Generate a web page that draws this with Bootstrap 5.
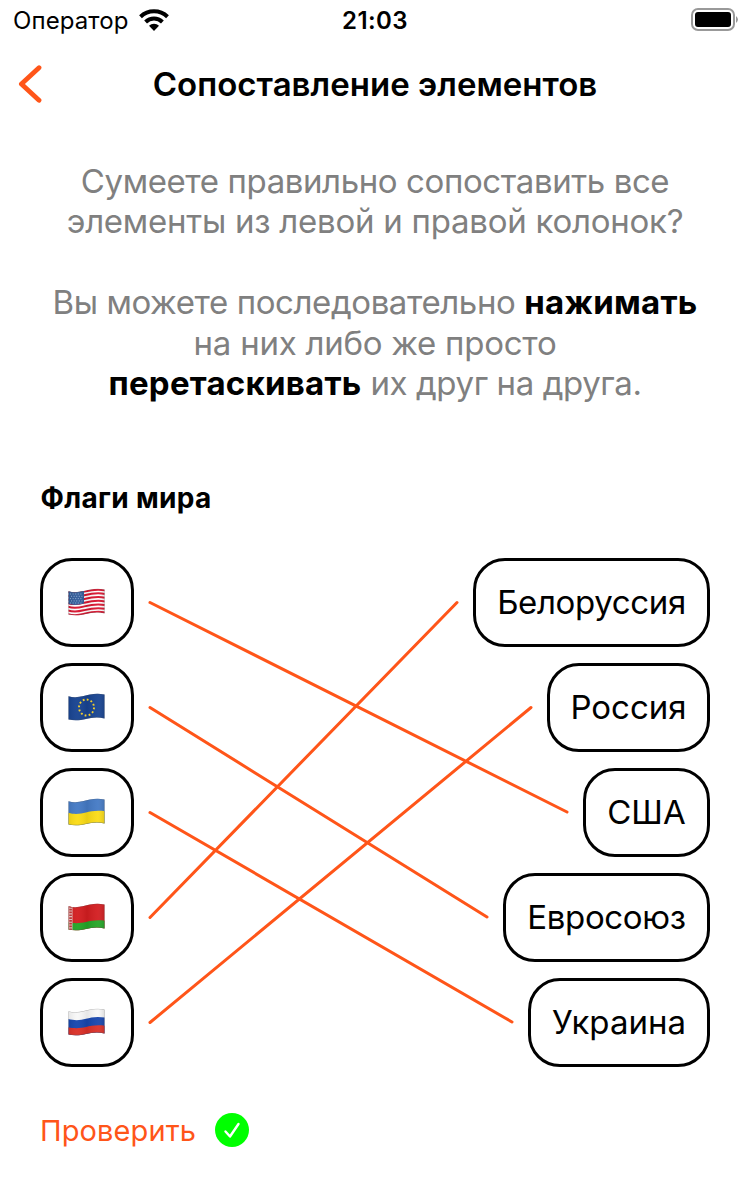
<!DOCTYPE html>
<html lang="ru">
<head>
<meta charset="utf-8">
<meta name="viewport" content="width=device-width, initial-scale=1">
<title>Сопоставление элементов</title>
<link href="https://cdn.jsdelivr.net/npm/bootstrap@5.3.0/dist/css/bootstrap.min.css" rel="stylesheet">
<style>
body{font-family:Inter,"Liberation Sans",sans-serif;background:#fff;color:#000;width:750px;height:1198px;overflow:hidden}
.status-bar{height:40px;padding-left:13px;padding-right:12px;font-size:24px;line-height:40px}
.carrier{letter-spacing:.1px;padding-top:2px}
.wifi{margin-left:10px}
.battery{margin-top:8px}
.clock{font-weight:600;letter-spacing:.4px;padding-top:1px}
.title-bar{height:88px;padding-left:18px}
.title-bar h1{font-size:33px;font-weight:600;letter-spacing:.03px;line-height:40px}
.intro{height:330px;padding-top:32.6px;font-size:33px;line-height:40.5px;color:#808080}
.intro span{white-space:nowrap;letter-spacing:-.4px}
.intro .fit-loose{letter-spacing:-.25px}
.intro b{color:#000;font-weight:700;letter-spacing:.25px}
.group-title{height:100px;padding:19.5px 40.5px 0;font-size:28px;font-weight:700;line-height:40px;letter-spacing:.32px}
.match-board{height:509px;padding:0 40px}
.match-list{gap:16px}
.chip{height:89px;border:3px solid #000;border-radius:32px;font-size:33px;line-height:1;background:#fff;white-space:nowrap}
.chip-flag{width:94px}
.chip-long{letter-spacing:-.36px}
.match-lines{stroke:#ff5519;stroke-width:3;stroke-linecap:round}
.check-row{padding:45px 40px 0;gap:19px}
.check-link{color:#ff5519;font-size:29px;line-height:34px;padding-top:2px;letter-spacing:.12px}
</style>
</head>
<body>
<svg width="0" height="0" class="position-absolute" aria-hidden="true">
  <defs>
    <clipPath id="wave"><path d="M.5 3.2C5 4.6 10 4.4 15.500 3S28-.4 36.500 1.500V25.400C29 23.600 23 24.800 18 26S6 27.800.5 26.500Z"/></clipPath>
    <linearGradient id="fold"><stop offset="0" stop-color="#000" stop-opacity=".08"/><stop offset=".25" stop-color="#fff" stop-opacity=".04"/><stop offset=".5" stop-color="#000" stop-opacity=".07"/><stop offset=".78" stop-color="#fff" stop-opacity=".05"/><stop offset="1" stop-color="#000" stop-opacity=".16"/></linearGradient>
    <g id="shade"><rect width="38" height="30" fill="url(#fold)"/><path d="M.5 3.2C5 4.6 10 4.4 15.500 3S28-.4 36.500 1.500V25.400C29 23.600 23 24.800 18 26S6 27.800.5 26.500Z" fill="none" stroke="#555" stroke-opacity=".4" stroke-width="1"/></g>
  </defs>
</svg>
<header>
  <div class="status-bar d-flex justify-content-between position-relative">
    <div class="d-flex align-items-center"><span class="carrier">Оператор</span>
      <svg class="wifi" width="30" height="22" viewBox="0 0 30 22"><g fill="none" stroke="#000" stroke-width="4"><path d="M1.500 7.800A19.500 19.500 0 0 1 28.500 7.800"/><path d="M6.600 13A12 12 0 0 1 23.400 13"/></g><path d="M10 16.700a7.200 7.200 0 0 1 10 0L15 22z"/></svg>
    </div>
    <div class="clock position-absolute start-50 translate-middle-x">21:03</div>
    <svg class="battery" width="48" height="24" viewBox="0 0 48 24"><rect x="2" y="1" width="42" height="21" rx="6" fill="none" stroke="#999" stroke-width="2"/><rect x="5" y="4" width="36" height="15" rx="3"/><path d="M46 8q4 3.500 0 7z" fill="#999"/></svg>
  </div>
  <div class="title-bar d-flex align-items-center position-relative">
    <svg width="24" height="38" viewBox="0 0 24 38" fill="none" stroke="#ff5519" stroke-width="4.800" stroke-linecap="round" stroke-linejoin="round"><path d="M21 2.700 3.400 19 21 35.300"/></svg>
    <h1 class="m-0 position-absolute start-50 translate-middle-x text-nowrap">Сопоставление элементов</h1>
  </div>
</header>
<main>
  <div class="intro text-center">
    <span>Сумеете правильно сопоставить все</span><br><span class="fit-loose">элементы из левой и правой колонок?</span><br><br>
    <span>Вы можете последовательно <b>нажимать</b></span><br><span class="fit-loose">на них либо же просто</span><br><span><b>перетаскивать</b> их друг на друга.</span>
  </div>
  <h2 class="group-title m-0">Флаги мира</h2>
  <div class="match-board d-flex justify-content-between position-relative">
    <svg class="match-lines position-absolute top-0 start-0" width="750" height="509"><path d="M150 44.500 567 254M150 149.500 487 359M150 254.500 512 464M150 359.500 457 44.500M150 464.500 531 149.500"/></svg>
    <div class="match-list d-flex flex-column">
      <div class="chip chip-flag d-flex align-items-center justify-content-center"><svg width="38" height="29"><g clip-path="url(#wave)"><path fill="#fff" d="M0 0h38v29H0z"/><g fill="none" stroke="#d9142f" stroke-width="2"><path id="st" d="M0 4C5 5.500 10 5.200 15.500 3.800S28 .4 37 2.300"/><use href="#st" y="3.700"/><use href="#st" y="7.400"/><use href="#st" y="11.100"/><use href="#st" y="14.800"/><use href="#st" y="18.500"/><use href="#st" y="22.200"/></g><path fill="#315b99" d="M0 2h16v13.500q-8 2.500-16 .6z"/><g stroke="#8fadd2" stroke-width="1" stroke-dasharray="1 1.600"><path d="M2 6h13M3 8.300h12M2 10.600h13M3 12.900h12M2 15h12"/></g><use href="#shade"/></g></svg></div>
      <div class="chip chip-flag d-flex align-items-center justify-content-center"><svg width="38" height="29"><g clip-path="url(#wave)"><path fill="#174391" d="M0 0h38v29H0z"/><use href="#shade"/></g><ellipse cx="18.500" cy="14.500" rx="7.500" ry="8" fill="none" stroke="#f3cf2d" stroke-width="1.900" stroke-dasharray="1.800 2.260"/></svg></div>
      <div class="chip chip-flag d-flex align-items-center justify-content-center"><svg width="38" height="29"><g clip-path="url(#wave)"><path fill="#447ac5" d="M0 0h38v29H0z"/><path fill="#fbdc16" d="M0 14.800C8 17 13 15.500 18 14.500S29 12 38 13.500V29H0z"/><use href="#shade"/></g></svg></div>
      <div class="chip chip-flag d-flex align-items-center justify-content-center"><svg width="38" height="29"><g clip-path="url(#wave)"><path fill="#d31d20" d="M0 0h38v29H0z"/><path fill="#24a526" d="M0 19.300C8 21 13 20 18 19S29 16.500 38 18V29H0z"/><path fill="#e6c2bf" d="M0 0h4.500v29H0z"/><path stroke="#c83738" stroke-width="2.600" stroke-dasharray="1.700 1.100" d="M2.600 3v25"/><use href="#shade"/></g></svg></div>
      <div class="chip chip-flag d-flex align-items-center justify-content-center"><svg width="38" height="29"><g clip-path="url(#wave)"><path fill="#f8f8f8" d="M0 0h38v29H0z"/><path fill="#1746ae" d="M0 11C8 13 13 12 18 10.700S29 8 38 9.700V29H0z"/><path fill="#db3028" d="M0 19.300C8 21 13 20 18 19S29 16.500 38 18V29H0z"/><use href="#shade"/></g></svg></div>
    </div>
    <div class="match-list d-flex flex-column align-items-end">
      <div class="chip chip-long d-flex align-items-center justify-content-center" style="width:237px"><span>Белоруссия</span></div>
      <div class="chip d-flex align-items-center justify-content-center" style="width:163px"><span>Россия</span></div>
      <div class="chip d-flex align-items-center justify-content-center" style="width:127px"><span>США</span></div>
      <div class="chip chip-long d-flex align-items-center justify-content-center" style="width:207px"><span>Евросоюз</span></div>
      <div class="chip d-flex align-items-center justify-content-center" style="width:182px"><span>Украина</span></div>
    </div>
  </div>
  <div class="check-row d-flex align-items-center">
    <a class="check-link text-decoration-none" href="#">Проверить</a>
    <svg width="34" height="34" viewBox="0 0 34 34"><circle cx="17" cy="17" r="17" fill="#0f0"/><path d="m10.500 18.500 4.500 5 8.500-12.500" fill="none" stroke="#fff" stroke-width="2.400" stroke-linecap="round" stroke-linejoin="round"/></svg>
  </div>
</main>
<script src="https://cdn.jsdelivr.net/npm/bootstrap@5.3.0/dist/js/bootstrap.bundle.min.js"></script>
</body>
</html>
